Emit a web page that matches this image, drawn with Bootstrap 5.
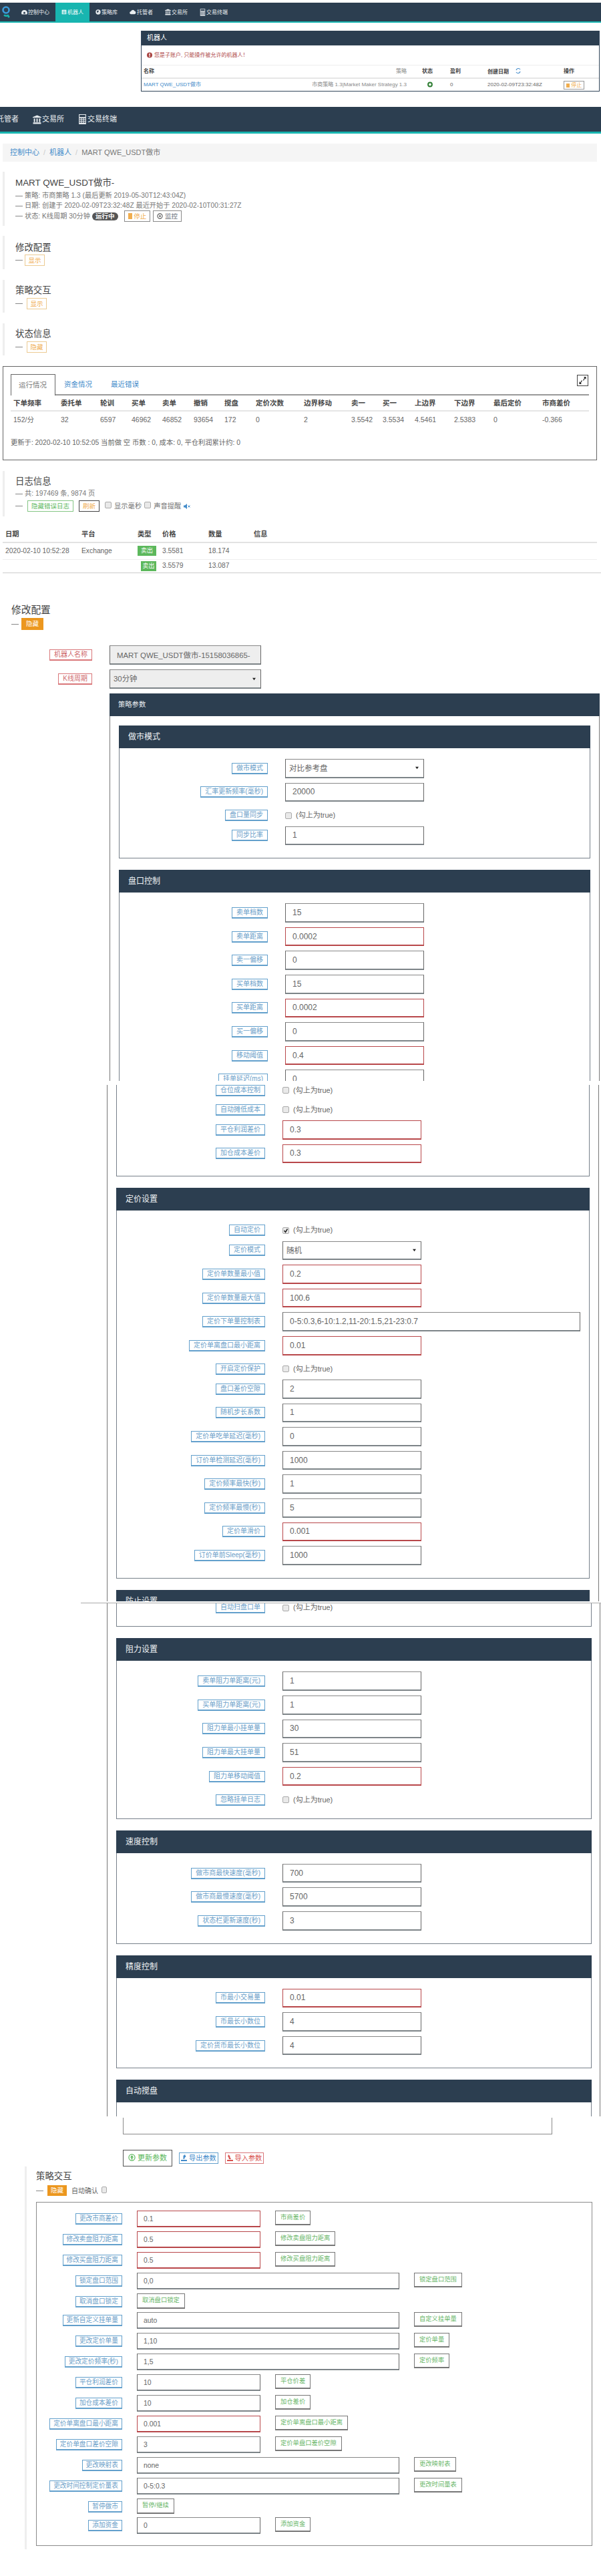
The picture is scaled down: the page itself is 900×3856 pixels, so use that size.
<!DOCTYPE html>
<html lang="zh">
<head>
<meta charset="utf-8">
<title>MART QWE_USDT做市</title>
<link href="https://cdn.jsdelivr.net/npm/bootstrap@5.3.0/dist/css/bootstrap.min.css" rel="stylesheet">
<style>
html,body{margin:0;padding:0;background:#fff}
body{width:900px;height:3856px;overflow:hidden;font-family:"Liberation Sans","Noto Sans CJK SC",sans-serif;font-size:11px;line-height:15px;color:#666}
a{text-decoration:none;color:#428bca}
svg{display:inline-block;vertical-align:-1px;flex:none}
.bar1,.bar2{background:#2c3e50;display:flex;color:#fff}
.bar1{margin-top:4px;height:30px;border-bottom:2px solid #18b5b0;font-size:8px;padding-left:3px;align-items:stretch}
.bar1 .logo{width:20px;display:flex;align-items:center}
.bar1 .itm{display:flex;align-items:center;gap:1px;padding:0 9px;color:#e8ecef}
.bar1 .itm.on{background:#18b5b0;color:#fff}
.bar2{margin-top:23px;height:40px;border-bottom:3px solid #18b5b0;font-size:11px;align-items:center;gap:21px}
.bar2 .itm{display:flex;align-items:center;gap:1px;color:#e8ecef}
.bar2 .itm:first-child{margin-left:-5px}
.botpanel{margin:12px 0 0 211px;width:687px;height:91px;border:1px solid #33475b;border-top:0;border-left-width:1px}
.botpanel .phead{height:22px;background:#2c3e50;color:#fff;font-size:10px;line-height:22px;padding-left:8px}
.botpanel .warn{height:30px;display:flex;align-items:center;gap:3px;padding-left:8px;font-size:8px;color:#b04a4a;border-bottom:1px solid #eee}
.tb{table-layout:fixed;border-collapse:collapse;margin:0;width:100%;--bs-table-bg:transparent}
.tb th,.tb td{padding:0 0 0 4px;vertical-align:middle;white-space:nowrap;border:0;color:#666;background:transparent;box-shadow:none}
.tb th{color:#444}
.tbot{font-size:8px;line-height:10px}
.tbot th{height:19px;border-bottom:2px solid #e6e6e6;padding-left:3px}
.tbot td{height:19px;padding-left:3px}
.tbot th:nth-child(1){width:249px}
.tbot th:nth-child(2){width:168px;text-align:right;padding-right:20px;font-weight:400;color:#888}
.tbot td:nth-child(2){text-align:right;padding-right:20px;color:#888}
.tbot th:nth-child(3){width:42px}
.tbot th:nth-child(4){width:56px}
.tbot th:nth-child(5){width:114px}
.mb-stop{display:inline-block;border:1px solid #999;color:#f0ad4e;font-size:8px;line-height:11px;padding:0 3px;height:13px}
.crumb{margin:15px 0 0 4px;width:890px;height:27px;background:#f5f5f5;display:flex;align-items:center;padding-left:11px;gap:6px;color:#777}
.crumb i{font-style:normal;color:#ccc}
.zone{margin-left:4px;border-left:3px solid #eee;padding-left:16px}
.zone h4{font-size:13.4px;line-height:14px;margin:0;font-weight:400;color:#444}
.z1{margin-top:15px;height:81px;padding-top:10px}
.z1 h4{margin-bottom:4px}
.z1 .ln{height:15px;white-space:nowrap;color:#777;font-size:10.2px}
.z1 .ln.lst{height:17px;display:flex;align-items:center}
.pill{background:#555;color:#fff;border-radius:7px;padding:0 5px;font-size:9.6px;line-height:12px;font-weight:700;margin:0 9px 0 3px}
.mbtn{display:inline-block;border:1px solid #999;font-size:9.5px;line-height:15px;height:17px;text-align:center;background:#fff;padding:0 5px;white-space:nowrap}
.m-or{color:#f0ad4e;border-color:#eccb93}
.m-or2{color:#f0ad4e;border-color:#8a8a8a}
.m-gr{color:#5cb85c;border-color:#85c585}
.m-dk{color:#f0ad4e;border-color:#444}
.m-fill{background:#ec971f;border-color:#ec971f;color:#fff}
.dash{display:inline-block;width:11px;height:1px;background:#888;margin-right:3px;vertical-align:middle}
.z2{margin-top:15px;height:50px;padding-top:11px}
.z3{margin-top:16px;height:49px;padding-top:9px}
.z4{margin-top:16px;height:48px;padding-top:9px}
.zrow{margin-top:3px;height:17px;display:flex;align-items:center}
.z3 .zrow,.z4 .zrow{margin-top:4px}
.z3 .dash,.z4 .dash{margin-right:6px}
.z2 .mbtn,.z3 .mbtn,.z4 .mbtn{width:30px;padding:0}
.tabbox{margin:16px 0 0 4px;width:890px;height:141px;border:1px solid #666;padding:11px}
.tabbox .nav-tabs{height:32px;border-bottom:2px solid #999;flex-wrap:nowrap;font-size:10.5px;position:relative}
.tabbox .nav-link{border:0;border-radius:0;padding:0 7px;height:30px;line-height:30px;margin:0 6px 0 0;color:#428bca;background:transparent}
.tabbox .nav-link.active{border:1px solid #666;border-bottom:0;height:32px;width:67px;padding:0 11px;margin-right:6px;color:#777;background:#fff;margin-bottom:-2px}
.expand{margin-left:auto;margin-right:1px;width:17px;height:17px;border:1px solid #444;display:flex;align-items:center;justify-content:center;background:#fff;margin-top:1px}
.tstat{font-size:10.5px;line-height:12px}
.tstat th{height:23px;border-bottom:2px solid #e6e6e6}
.tstat td{height:25px}
.tstat th:nth-child(1){width:71px}.tstat th:nth-child(2){width:59px}.tstat th:nth-child(3){width:47px}.tstat th:nth-child(4){width:46px}.tstat th:nth-child(5){width:47px}.tstat th:nth-child(6){width:46px}.tstat th:nth-child(7){width:47px}.tstat th:nth-child(8){width:72px}.tstat th:nth-child(9){width:71px}.tstat th:nth-child(10){width:47px}.tstat th:nth-child(11){width:48px}.tstat th:nth-child(12){width:59px}.tstat th:nth-child(13){width:59px}.tstat th:nth-child(14){width:73px}
.upd{margin-top:14px;font-size:10.3px;line-height:17px;color:#666}
.zlog{margin-top:16px;height:68px;padding-top:9px}
.zlog .l1{margin-top:4px;height:14px;line-height:14px;color:#777;font-size:10.3px}
.zlog .l2{margin-top:3px;height:17px;display:flex;align-items:center;color:#777;font-size:10.3px}
.tk{appearance:none;display:inline-block;width:10px;height:10px;margin:0;background:#e9e9e9;border:1px solid #aaa;border-radius:2px;flex:none}
.tlog{margin:15px 0 0 4px;width:890px;font-size:10.3px;line-height:12px}
.tlog th{height:24px;border-bottom:2px solid #e2e2e2}
.tlog tr.r1 td{height:25px;border-bottom:1px solid #eee}
.tlog tr.r2 td{height:20px}
.tlog th:nth-child(1){width:114px}.tlog th:nth-child(2){width:88px}.tlog th:nth-child(3){width:33px;padding-left:0}.tlog th:nth-child(4){width:69px}.tlog th:nth-child(5){width:68px}
.tlog td:nth-child(3){padding-left:0}
.sell{display:inline-block;background:#5cb85c;color:#fff;font-size:9px;line-height:15px;height:15px;width:28px;text-align:center;vertical-align:middle}
.sell.cut{width:23px;margin-left:5px}
.logend{margin-left:4px;border-top:1px solid #ccc}
.cfg-h{margin:46px 0 0 17px;font-size:14.7px;line-height:18px;color:#444;font-weight:400}
.cfg-s{margin:3px 0 0 17px;height:18px;display:flex;align-items:center}
.cfg-s .dash{margin-right:4px}
.cfg-s .mbtn{width:33px;padding:0;height:18px}
.trow{display:flex;align-items:center;gap:26px;margin-top:7px}
.trow.first{margin-top:23px}
.tcol{width:138px;display:flex;justify-content:flex-end;flex:none}
.lab{display:inline-block;height:17px;line-height:14px;border:1px solid #63a0cc;border-bottom-width:2px;color:#6ba0c9;font-size:10px;padding:0 6px;white-space:nowrap;background:#fff}
.lab.rd{border-color:#d9777a;color:#cf6b6e}
.fld.form-control,.fld.form-select{width:208px;height:28.6px;min-height:0;border-radius:0;border:1px solid #666;border-top-color:#888;border-bottom:2px solid #7d8488;padding:0 10px;font-size:12px;line-height:26px;color:#666;background-color:#fff;box-shadow:none;font-family:inherit}
.fld.bad{border-color:#b8474a}
.fld.wd.form-control{width:446px}
.fld.form-select{padding-left:5px;font-size:11.5px;background-image:url("data:image/svg+xml,%3csvg xmlns='http://www.w3.org/2000/svg' viewBox='0 0 8 6'%3e%3cpath fill='%23222' d='M1 1h6L4 5z'/%3e%3c/svg%3e");background-size:7px 5px;background-position:right 6px center}
.fld.gray.form-control,.fld.gray.form-select{background-color:#eee;width:227px;height:29px;font-size:11.4px}
.fld.gray.form-control{padding-left:10px}
.shell{margin-left:164px;width:734px;border-left:1px solid #777;border-right:1px solid #777}
.shell .top{height:34px;background:#2c3e50;color:#e8ecef;font-size:10.3px;line-height:34px;padding-left:13px;margin:0 -1px}
.shell .bd{padding:14px 13px 0}
.crd{border:1px solid #77808a;border-top:0;margin-bottom:17px;background:#fff}
.crd .hd{height:34px;margin:0 -1px;background:#2c3e50;color:#f0f3f5;font-size:12px;line-height:34px;padding-left:14px}
.crd .in{padding:16px 0 12px}
.fr{display:flex;gap:26px;height:35.6px;padding-bottom:7px;align-items:center}
.fr.ck{height:29.4px;padding-bottom:2px}
.fl{width:222px;flex:none;display:flex;justify-content:flex-end}
.cktxt{display:flex;align-items:center;gap:6px;color:#666;font-size:11px}
.sl1{height:580px;overflow:hidden;margin-top:7px}
.sl2{height:773px;overflow:hidden;margin-top:6px;margin-left:160px;width:737px}
.sl2 .shell{margin-left:0;width:737px;margin-top:-5.7px}
.sl2 .in.cut{padding-top:0}
.sl2 .crd.c0{border-top:0}
.sl3{height:769px;overflow:hidden;margin-top:2px;margin-left:121px;border-top:1px solid #aaa;padding-left:39px}
.sl3 .shell{margin-left:0;width:739px;margin-top:-7px}
.sl3 .bd{padding-right:12px}
.tail{margin:2px 0 0 184px;width:643px;height:25px;border:1px solid #8b8b8b;border-top:0}
.act{margin:23px 0 0 184px;height:25px;display:flex;align-items:center;gap:10px}
.act .mbtn{font-size:10.2px}
.act .big{width:74px;height:25px;line-height:23px;border-color:#555;color:#5cb85c;font-size:11px;padding:0}
.act .ex{width:59px;padding:0;border-color:#63a0cc;color:#428bca}
.act .im{width:58px;padding:0;border-color:#d9777a;color:#d9534f}
.zsx{margin-left:37px;border-left:3px solid #eee;padding:8px 0 0 14px;height:573px}
.zsx h4{font-size:13.4px;line-height:14px;margin:0;font-weight:400;color:#444}
.zsx .sr{margin-top:6px;height:16px;display:flex;align-items:center;color:#666;font-size:10px}
.zsx .sr .mbtn{width:29px;height:16px;line-height:14px;padding:0;margin-left:3px;margin-right:7px}
.zsx .sr .tk{width:8px;margin:0 0 3px 5px}
.box{margin-top:9px;width:833px;height:515px;border:1px solid #8b8b8b;padding-top:12px}
.ir{display:flex;align-items:flex-start;height:31px;gap:22px}
.ir.sh{height:28px}
.il{width:128px;height:25px;flex:none;display:flex;justify-content:flex-end;align-items:center}
.il .lab{font-size:9.7px;padding:0 5px}
.ir .fld.form-control{width:185px;height:25px;padding:0 9px;font-size:10.4px;line-height:23px;flex:none}
.ir .fld.wd.form-control{width:393px}
.gbtn{display:inline-block;height:22px;line-height:18px;border:1px solid #777;border-bottom-width:2px;color:#6bb76b;font-size:9.3px;padding:0 7px;white-space:nowrap;background:#fff}
.gbtn.tall{height:23px}
</style>
</head>
<body>
<svg width="0" height="0" class="position-absolute">
<defs>
<symbol id="i-dash" viewBox="0 0 12 10"><path fill="currentColor" d="M6 1a6 6 0 0 0-6 6c0 1 .3 2 .8 2.600h10.400c.5-.6.8-1.600.8-2.600a6 6 0 0 0-6-6zM6 4.500a2 2 0 1 1 0 4 2 2 0 0 1 0-4z"/></symbol>
<symbol id="i-robot" viewBox="0 0 12 12"><path fill="currentColor" d="M1 1h10v10H1zM2.500 3v1.300h7V3zm0 2.500v1.300h7V5.500zm0 2.500v1.300h7V8z"/></symbol>
<symbol id="i-globe" viewBox="0 0 12 12"><circle cx="6" cy="6" r="5.500" fill="currentColor"/><path fill="#2c3e50" d="M3 3.500l3-1 2 1.500-2 1.500-1 3-1.500-2zM9 7l1 0-1.500 2z"/></symbol>
<symbol id="i-cloud" viewBox="0 0 14 10"><path fill="currentColor" d="M3.500 9.500a3 3 0 0 1-.5-6 4 4 0 0 1 7.500-.5 3.300 3.300 0 0 1 0 6.500z"/></symbol>
<symbol id="i-bank" viewBox="0 0 12 12"><path fill="currentColor" d="M6 0l6 2.500v1H0v-1zM1.500 4.500h1.800v5H1.500zm3.600 0h1.800v5H5.100zm3.600 0h1.800v5H8.700zM.500 10h11v2H.500z"/></symbol>
<symbol id="i-calc" viewBox="0 0 12 14"><path fill="currentColor" d="M1 0h10v14H1zm1 1v3h8V1zm0 4.500v1.500h2V5.500zm3 0v1.500h2V5.500zm3 0v1.500h2V5.500zm-6 2.500v1.500h2V8zm3 0v1.500h2V8zm3 0v1.500h2V8zm-6 2.500V12h2v-1.500zm3 0V12h2v-1.500zm3 0V12h2v-1.500z"/></symbol>
<symbol id="i-up" viewBox="0 0 12 12"><circle cx="6" cy="6" r="5" fill="none" stroke="currentColor" stroke-width="1.300"/><path fill="currentColor" d="M6 2.500L9 6H7v3.200H5V6H3z"/></symbol>
</defs>
</svg>

<nav class="bar1">
  <span class="logo"><svg width="12" height="20" viewBox="0 0 12 20"><circle cx="6" cy="7" r="4.500" fill="none" stroke="#3a9bd9" stroke-width="2.600"/><path d="M3 14.500c2 1.500 5 1.500 7 0" fill="none" stroke="#18b5b0" stroke-width="2.400"/><circle cx="10" cy="17" r="1.500" fill="#18b5b0"/></svg></span>
  <a class="itm" href="#"><svg width="9" height="8"><use href="#i-dash"/></svg>控制中心</a>
  <a class="itm on" href="#"><svg width="8" height="8"><use href="#i-robot"/></svg>机器人</a>
  <a class="itm" href="#"><svg width="8" height="8"><use href="#i-globe"/></svg>策略库</a>
  <a class="itm" href="#"><svg width="10" height="8"><use href="#i-cloud"/></svg>托管者</a>
  <a class="itm" href="#"><svg width="9" height="10"><use href="#i-bank"/></svg>交易所</a>
  <a class="itm" href="#"><svg width="9" height="11"><use href="#i-calc"/></svg>交易终端</a>
</nav>

<div class="botpanel">
  <div class="phead">机器人</div>
  <div class="warn"><svg width="8" height="9" viewBox="0 0 8 9"><circle cx="4" cy="4.500" r="4" fill="#a94442"/><rect x="3.300" y="2" width="1.400" height="3.500" fill="#fff"/><rect x="3.300" y="6" width="1.400" height="1.200" fill="#fff"/></svg>您是子账户, 只能操作被允许的机器人！</div>
  <table class="table tb tbot">
    <thead><tr><th>名称</th><th>策略</th><th>状态</th><th>盈利</th><th>创建日期 <svg class="ms-2" width="8" height="10" viewBox="0 0 8 10"><path d="M7 3A3.300 3.300 0 0 0 1 4M1 7a3.300 3.300 0 0 0 6-1" fill="none" stroke="#428bca" stroke-width="1.100"/></svg></th><th>操作</th></tr></thead>
    <tbody><tr><td><a href="#">MART QWE_USDT做市</a></td><td>市商策略 1.3|Market Maker Strategy 1.3</td><td><svg class="ms-2" width="8" height="9" viewBox="0 0 8 9"><circle cx="4" cy="4.500" r="2.900" fill="none" stroke="#2e7d32" stroke-width="2"/></svg></td><td>0</td><td>2020-02-09T23:32:48Z</td><td><span class="mb-stop"><svg width="5" height="6" viewBox="0 0 5 6"><rect width="5" height="6" fill="#f0ad4e"/></svg> 停止</span></td></tr></tbody>
  </table>
</div>

<nav class="bar2">
  <a class="itm" href="#">托管者</a>
  <a class="itm" href="#"><svg width="13" height="14"><use href="#i-bank"/></svg>交易所</a>
  <a class="itm" href="#"><svg width="13" height="15"><use href="#i-calc"/></svg>交易终端</a>
</nav>

<div class="crumb"><a href="#">控制中心</a><i>/</i><a href="#">机器人</a><i>/</i><span>MART QWE_USDT做市</span></div>

<section class="zone z1">
  <h4>MART QWE_USDT做市-</h4>
  <div class="ln"><span class="dash"></span>策略: 市商策略 1.3 (最后更新 2019-05-30T12:43:04Z)</div>
  <div class="ln"><span class="dash"></span>日期: 创建于 2020-02-09T23:32:48Z 最近开始于 2020-02-10T00:31:27Z</div>
  <div class="ln lst"><span class="dash"></span>状态: K线周期 30分钟 <span class="pill">运行中</span><span class="mbtn m-or2 me-1"><svg width="6" height="9" viewBox="0 0 6 9"><rect width="6" height="9" fill="#f0ad4e"/></svg> 停止</span><span class="mbtn m-or2 text-secondary"><svg width="9" height="9" viewBox="0 0 10 10"><circle cx="5" cy="5" r="4" fill="none" stroke="#555" stroke-width="1.200"/><circle cx="5" cy="5" r="1.500" fill="#555"/></svg> 监控</span></div>
</section>
<section class="zone z2"><h4>修改配置</h4><div class="zrow"><span class="dash"></span><span class="mbtn m-or">显示</span></div></section>
<section class="zone z3"><h4>策略交互</h4><div class="zrow"><span class="dash"></span><span class="mbtn m-or">显示</span></div></section>
<section class="zone z4"><h4>状态信息</h4><div class="zrow"><span class="dash"></span><span class="mbtn m-or">隐藏</span></div></section>

<div class="tabbox">
  <ul class="nav nav-tabs">
    <li class="nav-item"><a class="nav-link active" href="#">运行情况</a></li>
    <li class="nav-item"><a class="nav-link" href="#">资金情况</a></li>
    <li class="nav-item"><a class="nav-link ms-2" href="#">最近错误</a></li>
    <li class="expand"><svg width="11" height="13" viewBox="0 0 11 13"><path d="M6.500 6.500L9.500 1.500M4.500 6.500L1.500 11.500" stroke="#222" stroke-width="1.200"/><path d="M7 1h3.500v4zM4 12H.500V8z" fill="#222"/></svg></li>
  </ul>
  <table class="table tb tstat">
    <thead><tr><th>下单频率</th><th>委托单</th><th>轮训</th><th>买单</th><th>卖单</th><th>撤销</th><th>搅盘</th><th>定价次数</th><th>边界移动</th><th>卖一</th><th>买一</th><th>上边界</th><th>下边界</th><th>最后定价</th><th>市商差价</th></tr></thead>
    <tbody><tr><td>152/分</td><td>32</td><td>6597</td><td>46962</td><td>46852</td><td>93654</td><td>172</td><td>0</td><td>2</td><td>3.5542</td><td>3.5534</td><td>4.5461</td><td>2.5383</td><td>0</td><td>-0.366</td></tr></tbody>
  </table>
  <div class="upd">更新于: 2020-02-10 10:52:05 当前做 空 币数 : 0, 成本: 0, 平仓利润累计约: 0</div>
</div>

<section class="zone zlog">
  <h4>日志信息</h4>
  <div class="l1"><span class="dash"></span>共: 197469 条, 9874 页</div>
  <div class="l2"><span class="dash"></span><span class="mbtn m-gr ms-1">隐藏错误日志</span><span class="mbtn m-dk ms-2">刷新</span><input type="checkbox" class="tk ms-2 mb-1" aria-label="显示毫秒"><span class="ms-1">显示毫秒</span><input type="checkbox" class="tk ms-1 mb-1" aria-label="声音提醒"><span class="ms-1">声音提醒</span><svg class="ms-1" width="10" height="8" viewBox="0 0 10 8"><path fill="#428bca" d="M0 2.500h2L5 0v8L2 5.500H0z"/><path d="M6.500 2.500l3 3M9.500 2.500l-3 3" stroke="#428bca" stroke-width="1"/></svg></div>
</section>

<table class="table tb tlog">
  <thead><tr><th>日期</th><th>平台</th><th>类型</th><th>价格</th><th>数量</th><th>信息</th></tr></thead>
  <tbody>
    <tr class="r1"><td>2020-02-10 10:52:28</td><td>Exchange</td><td><span class="sell">卖出</span></td><td>3.5581</td><td>18.174</td><td></td></tr>
    <tr class="r2"><td></td><td></td><td><span class="sell cut">卖出</span></td><td>3.5579</td><td>13.087</td><td></td></tr>
  </tbody>
</table>
<div class="logend"></div>

<h4 class="cfg-h">修改配置</h4>
<div class="cfg-s"><span class="dash"></span><span class="mbtn m-fill">隐藏</span></div>

<div class="trow first"><div class="tcol"><span class="lab rd">机器人名称</span></div><input class="form-control fld gray" value="MART QWE_USDT做市-15158036865-" aria-label="机器人名称"></div>
<div class="trow"><div class="tcol"><span class="lab rd">K线周期</span></div><select class="form-select fld gray" aria-label="K线周期"><option>30分钟</option></select></div>

<div class="sl1">
<div class="shell">
  <div class="top">策略参数</div>
  <div class="bd">
    <div class="crd">
      <div class="hd">做市模式</div>
      <div class="in">
        <div class="fr"><div class="fl"><span class="lab">做市模式</span></div><select class="form-select fld" aria-label="做市模式"><option>对比参考盘</option></select></div>
        <div class="fr"><div class="fl"><span class="lab">汇率更新频率(毫秒)</span></div><input class="form-control fld" value="20000" aria-label="汇率更新频率"></div>
        <div class="fr ck"><div class="fl"><span class="lab">盘口量同步</span></div><div class="cktxt"><input type="checkbox" class="tk" aria-label="盘口量同步">(勾上为true)</div></div>
        <div class="fr"><div class="fl"><span class="lab">同步比率</span></div><input class="form-control fld" value="1" aria-label="同步比率"></div>
      </div>
    </div>
    <div class="crd">
      <div class="hd">盘口控制</div>
      <div class="in">
        <div class="fr"><div class="fl"><span class="lab">卖单档数</span></div><input class="form-control fld" value="15" aria-label="卖单档数"></div>
        <div class="fr"><div class="fl"><span class="lab">卖单距离</span></div><input class="form-control fld bad" value="0.0002" aria-label="卖单距离"></div>
        <div class="fr"><div class="fl"><span class="lab">卖一偏移</span></div><input class="form-control fld" value="0" aria-label="卖一偏移"></div>
        <div class="fr"><div class="fl"><span class="lab">买单档数</span></div><input class="form-control fld" value="15" aria-label="买单档数"></div>
        <div class="fr"><div class="fl"><span class="lab">买单距离</span></div><input class="form-control fld bad" value="0.0002" aria-label="买单距离"></div>
        <div class="fr"><div class="fl"><span class="lab">买一偏移</span></div><input class="form-control fld" value="0" aria-label="买一偏移"></div>
        <div class="fr"><div class="fl"><span class="lab">移动阈值</span></div><input class="form-control fld bad" value="0.4" aria-label="移动阈值"></div>
        <div class="fr"><div class="fl"><span class="lab">挂单延迟(ms)</span></div><input class="form-control fld" value="0" aria-label="挂单延迟"></div>
      </div>
    </div>
  </div>
</div>
</div>

<div class="sl2">
<div class="shell">
  <div class="bd pt-0">
    <div class="crd c0">
      <div class="in cut">
        <div class="fr ck"><div class="fl"><span class="lab">仓位成本控制</span></div><div class="cktxt"><input type="checkbox" class="tk" aria-label="仓位成本控制">(勾上为true)</div></div>
        <div class="fr ck"><div class="fl"><span class="lab">自动摊低成本</span></div><div class="cktxt"><input type="checkbox" class="tk" aria-label="自动摊低成本">(勾上为true)</div></div>
        <div class="fr"><div class="fl"><span class="lab">平仓利润差价</span></div><input class="form-control fld bad" value="0.3" aria-label="平仓利润差价"></div>
        <div class="fr"><div class="fl"><span class="lab">加仓成本差价</span></div><input class="form-control fld bad" value="0.3" aria-label="加仓成本差价"></div>
      </div>
    </div>
    <div class="crd">
      <div class="hd">定价设置</div>
      <div class="in">
        <div class="fr ck"><div class="fl"><span class="lab">自动定价</span></div><div class="cktxt"><svg width="10" height="10" viewBox="0 0 10 10"><rect x=".5" y=".5" width="9" height="9" rx="1.500" fill="#e9e9e9" stroke="#aaa"/><path d="M2.500 5l2 2.500 3-5" fill="none" stroke="#222" stroke-width="1.500"/></svg>(勾上为true)</div></div>
        <div class="fr"><div class="fl"><span class="lab">定价模式</span></div><select class="form-select fld" aria-label="定价模式"><option>随机</option></select></div>
        <div class="fr"><div class="fl"><span class="lab">定价单数量最小值</span></div><input class="form-control fld bad" value="0.2" aria-label="定价单数量最小值"></div>
        <div class="fr"><div class="fl"><span class="lab">定价单数量最大值</span></div><input class="form-control fld bad" value="100.6" aria-label="定价单数量最大值"></div>
        <div class="fr"><div class="fl"><span class="lab">定价下单量控制表</span></div><input class="form-control fld wd" value="0-5:0.3,6-10:1.2,11-20:1.5,21-23:0.7" aria-label="定价下单量控制表"></div>
        <div class="fr"><div class="fl"><span class="lab">定价单离盘口最小距离</span></div><input class="form-control fld bad" value="0.01" aria-label="定价单离盘口最小距离"></div>
        <div class="fr ck"><div class="fl"><span class="lab">开启定价保护</span></div><div class="cktxt"><input type="checkbox" class="tk" aria-label="开启定价保护">(勾上为true)</div></div>
        <div class="fr"><div class="fl"><span class="lab">盘口差价空隙</span></div><input class="form-control fld" value="2" aria-label="盘口差价空隙"></div>
        <div class="fr"><div class="fl"><span class="lab">随机步长系数</span></div><input class="form-control fld" value="1" aria-label="随机步长系数"></div>
        <div class="fr"><div class="fl"><span class="lab">定价单吃单延迟(毫秒)</span></div><input class="form-control fld" value="0" aria-label="定价单吃单延迟"></div>
        <div class="fr"><div class="fl"><span class="lab">订价单检测延迟(毫秒)</span></div><input class="form-control fld" value="1000" aria-label="订价单检测延迟"></div>
        <div class="fr"><div class="fl"><span class="lab">定价频率最快(秒)</span></div><input class="form-control fld" value="1" aria-label="定价频率最快"></div>
        <div class="fr"><div class="fl"><span class="lab">定价频率最慢(秒)</span></div><input class="form-control fld" value="5" aria-label="定价频率最慢"></div>
        <div class="fr"><div class="fl"><span class="lab">定价单滑价</span></div><input class="form-control fld bad" value="0.001" aria-label="定价单滑价"></div>
        <div class="fr"><div class="fl"><span class="lab">订价单前Sleep(毫秒)</span></div><input class="form-control fld" value="1000" aria-label="订价单前Sleep"></div>
      </div>
    </div>
    <div class="crd">
      <div class="hd">防止设置</div>
    </div>
  </div>
</div>
</div>

<div class="sl3">
<div class="shell">
  <div class="bd pt-0">
    <div class="crd">
      <div class="in pt-0">
        <div class="fr ck"><div class="fl"><span class="lab">自动扫盘口单</span></div><div class="cktxt"><input type="checkbox" class="tk" aria-label="自动扫盘口单">(勾上为true)</div></div>
      </div>
    </div>
    <div class="crd">
      <div class="hd">阻力设置</div>
      <div class="in">
        <div class="fr"><div class="fl"><span class="lab">卖单阻力单距离(元)</span></div><input class="form-control fld" value="1" aria-label="卖单阻力单距离"></div>
        <div class="fr"><div class="fl"><span class="lab">买单阻力单距离(元)</span></div><input class="form-control fld" value="1" aria-label="买单阻力单距离"></div>
        <div class="fr"><div class="fl"><span class="lab">阻力单最小挂单量</span></div><input class="form-control fld" value="30" aria-label="阻力单最小挂单量"></div>
        <div class="fr"><div class="fl"><span class="lab">阻力单最大挂单量</span></div><input class="form-control fld" value="51" aria-label="阻力单最大挂单量"></div>
        <div class="fr"><div class="fl"><span class="lab">阻力单移动阈值</span></div><input class="form-control fld bad" value="0.2" aria-label="阻力单移动阈值"></div>
        <div class="fr ck"><div class="fl"><span class="lab">忽略挂单日志</span></div><div class="cktxt"><input type="checkbox" class="tk" aria-label="忽略挂单日志">(勾上为true)</div></div>
      </div>
    </div>
    <div class="crd">
      <div class="hd">速度控制</div>
      <div class="in">
        <div class="fr"><div class="fl"><span class="lab">做市商最快速度(毫秒)</span></div><input class="form-control fld" value="700" aria-label="做市商最快速度"></div>
        <div class="fr"><div class="fl"><span class="lab">做市商最慢速度(毫秒)</span></div><input class="form-control fld" value="5700" aria-label="做市商最慢速度"></div>
        <div class="fr"><div class="fl"><span class="lab">状态栏更新速度(秒)</span></div><input class="form-control fld" value="3" aria-label="状态栏更新速度"></div>
      </div>
    </div>
    <div class="crd">
      <div class="hd">精度控制</div>
      <div class="in">
        <div class="fr"><div class="fl"><span class="lab">币最小交易量</span></div><input class="form-control fld bad" value="0.01" aria-label="币最小交易量"></div>
        <div class="fr"><div class="fl"><span class="lab">币最长小数位</span></div><input class="form-control fld" value="4" aria-label="币最长小数位"></div>
        <div class="fr"><div class="fl"><span class="lab">定价货币最长小数位</span></div><input class="form-control fld" value="4" aria-label="定价货币最长小数位"></div>
      </div>
    </div>
    <div class="crd">
      <div class="hd">自动搅盘</div>
      <div class="in"></div>
    </div>
  </div>
</div>
</div>

<div class="tail"></div>
<div class="act">
  <span class="mbtn big"><svg width="11" height="11"><use href="#i-up"/></svg> 更新参数</span>
  <span class="mbtn ex"><svg width="9" height="10" viewBox="0 0 9 10"><path fill="#428bca" d="M0 8h9v2H0zM3 6l1-3H2.500L6 0l1.500 4H6L5 7z"/></svg> 导出参数</span>
  <span class="mbtn im"><svg width="9" height="10" viewBox="0 0 9 10"><path fill="#d9534f" d="M0 8h9v2H0zM2 0l3 3-1 0 2 4H3L2 3.500H1z"/></svg> 导入参数</span>
</div>

<section class="zsx">
  <h4>策略交互</h4>
  <div class="sr"><span class="dash"></span><span class="mbtn m-fill">隐藏</span><span>自动确认</span><input type="checkbox" class="tk" aria-label="自动确认"></div>
  <div class="box">
    <div class="ir"><div class="il"><span class="lab">更改市商差价</span></div><input class="form-control fld bad" value="0.1" aria-label="更改市商差价"><span class="gbtn">市商差价</span></div>
    <div class="ir"><div class="il"><span class="lab">修改卖盘阻力距离</span></div><input class="form-control fld bad" value="0.5" aria-label="修改卖盘阻力距离"><span class="gbtn">修改卖盘阻力距离</span></div>
    <div class="ir"><div class="il"><span class="lab">修改买盘阻力距离</span></div><input class="form-control fld bad" value="0.5" aria-label="修改买盘阻力距离"><span class="gbtn">修改买盘阻力距离</span></div>
    <div class="ir"><div class="il"><span class="lab">锁定盘口范围</span></div><input class="form-control fld wd" value="0,0" aria-label="锁定盘口范围"><span class="gbtn">锁定盘口范围</span></div>
    <div class="ir sh"><div class="il"><span class="lab">取消盘口锁定</span></div><span class="gbtn tall">取消盘口锁定</span></div>
    <div class="ir"><div class="il"><span class="lab">更新自定义挂单量</span></div><input class="form-control fld wd" value="auto" aria-label="更新自定义挂单量"><span class="gbtn">自定义挂单量</span></div>
    <div class="ir"><div class="il"><span class="lab">更改定价单量</span></div><input class="form-control fld wd" value="1,10" aria-label="更改定价单量"><span class="gbtn">定价单量</span></div>
    <div class="ir"><div class="il"><span class="lab">更改定价频率(秒)</span></div><input class="form-control fld wd" value="1,5" aria-label="更改定价频率"><span class="gbtn">定价频率</span></div>
    <div class="ir"><div class="il"><span class="lab">平仓利润差价</span></div><input class="form-control fld" value="10" aria-label="平仓利润差价"><span class="gbtn">平仓价差</span></div>
    <div class="ir"><div class="il"><span class="lab">加仓成本差价</span></div><input class="form-control fld" value="10" aria-label="加仓成本差价"><span class="gbtn">加仓差价</span></div>
    <div class="ir"><div class="il"><span class="lab">定价单离盘口最小距离</span></div><input class="form-control fld bad" value="0.001" aria-label="定价单离盘口最小距离"><span class="gbtn">定价单离盘口最小距离</span></div>
    <div class="ir"><div class="il"><span class="lab">定价单盘口差价空隙</span></div><input class="form-control fld" value="3" aria-label="定价单盘口差价空隙"><span class="gbtn">定价单盘口差价空隙</span></div>
    <div class="ir"><div class="il"><span class="lab">更改映射表</span></div><input class="form-control fld wd" value="none" aria-label="更改映射表"><span class="gbtn">更改映射表</span></div>
    <div class="ir"><div class="il"><span class="lab">更改时间控制定价量表</span></div><input class="form-control fld wd" value="0-5:0.3" aria-label="更改时间控制定价量表"><span class="gbtn">更改时间量表</span></div>
    <div class="ir sh"><div class="il"><span class="lab">暂停做市</span></div><span class="gbtn tall">暂停/继续</span></div>
    <div class="ir"><div class="il"><span class="lab">添加资金</span></div><input class="form-control fld" value="0" aria-label="添加资金"><span class="gbtn">添加资金</span></div>
  </div>
</section>

<script src="https://cdn.jsdelivr.net/npm/bootstrap@5.3.0/dist/js/bootstrap.bundle.min.js"></script>
</body>
</html>
